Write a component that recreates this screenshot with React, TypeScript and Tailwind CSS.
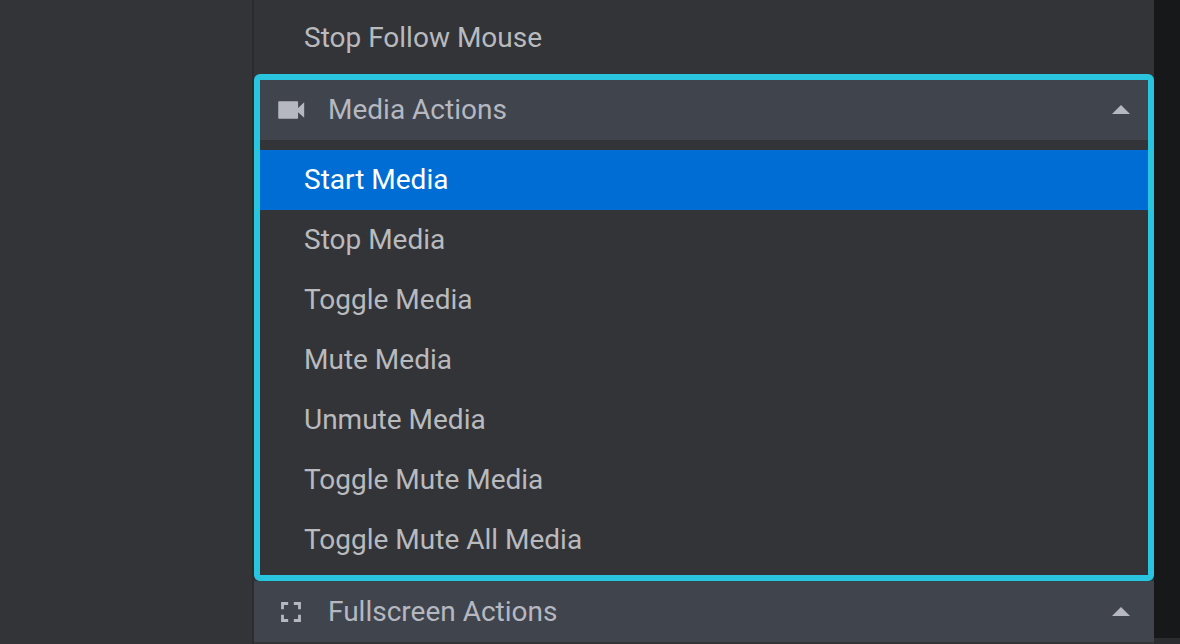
import type { ReactNode } from 'react';

const mediaActions = [
  'Start Media',
  'Stop Media',
  'Toggle Media',
  'Mute Media',
  'Unmute Media',
  'Toggle Mute Media',
  'Toggle Mute All Media',
];

const VideoIcon = () => (
  <svg viewBox="0 0 24 24" className="size-[34px]" fill="currentColor" aria-hidden="true">
    <path d="M17 10.5V6.6c0-.4-.3-.7-.7-.7H3.7c-.4 0-.7.3-.7.7v10.8c0 .4.3.7.7.7h12.600c.4 0 .7-.3.7-.7v-3.900l4.300 4v-11l-4.300 4z" />
  </svg>
);

const FullscreenIcon = () => (
  <svg viewBox="0 0 24 24" className="size-[34px]" fill="currentColor" aria-hidden="true">
    <path d="M7 14H5v5h5v-2H7v-3zm-2-4h2V7h3V5H5v5zm12 7h-3v2h5v-5h-2v3zM14 5v2h3v3h2V5h-5z" />
  </svg>
);

const SectionHeader = ({ icon, title }: { icon: ReactNode; title: string }) => (
  <button
    type="button"
    aria-expanded="true"
    className="flex h-15 w-full items-center bg-[#40444c] pr-[18px] pl-3.5 text-left text-[#b5b8c1]"
  >
    {icon}
    <span className="ml-5 flex-1">{title}</span>
    <svg viewBox="0 0 18 12" className="h-3 w-[18px]" fill="currentColor" aria-hidden="true">
      <path d="M0 10L9 1l9 9z" />
    </svg>
  </button>
);

const ActionItem = ({ label, selected = false }: { label: string; selected?: boolean }) => (
  <li>
    <button
      type="button"
      className={
        selected
          ? 'flex h-15 w-full items-center bg-[#006dd5] pl-11 text-left text-white'
          : 'flex h-15 w-full items-center pl-11 text-left text-[#b9babe]'
      }
    >
      {label}
    </button>
  </li>
);

export default function App() {
  return (
    <div className="flex min-h-screen bg-[#333438] font-['Roboto',sans-serif] text-[28px] leading-8">
      <aside className="w-[252px] shrink-0" />

      <main className="min-w-0 flex-1 border-l-2 border-[#2b2c2f]">
        <ul className="px-1.5 pt-2 pb-1.5">
          <ActionItem label="Stop Follow Mouse" />
        </ul>

        {/* Highlighted group */}
        <section className="rounded-md border-6 border-[#29c4de] pb-[5px]">
          <SectionHeader icon={<VideoIcon />} title="Media Actions" />
          <ul className="pt-2.5">
            {mediaActions.map((label, index) => (
              <ActionItem key={label} label={label} selected={index === 0} />
            ))}
          </ul>
        </section>

        <section className="border-t border-b-2 border-t-[#34474f] border-b-[#333438]">
          <div className="bg-[#40444c] px-1.5">
            <SectionHeader icon={<FullscreenIcon />} title="Fullscreen Actions" />
          </div>
        </section>
      </main>

      {/* Canvas edge behind the menu */}
      <div className="flex w-[26px] shrink-0 flex-col bg-[#17181a]">
        <div className="flex-1" />
        <div className="h-1.5 bg-[#2b2c2f]" />
      </div>
    </div>
  );
}
